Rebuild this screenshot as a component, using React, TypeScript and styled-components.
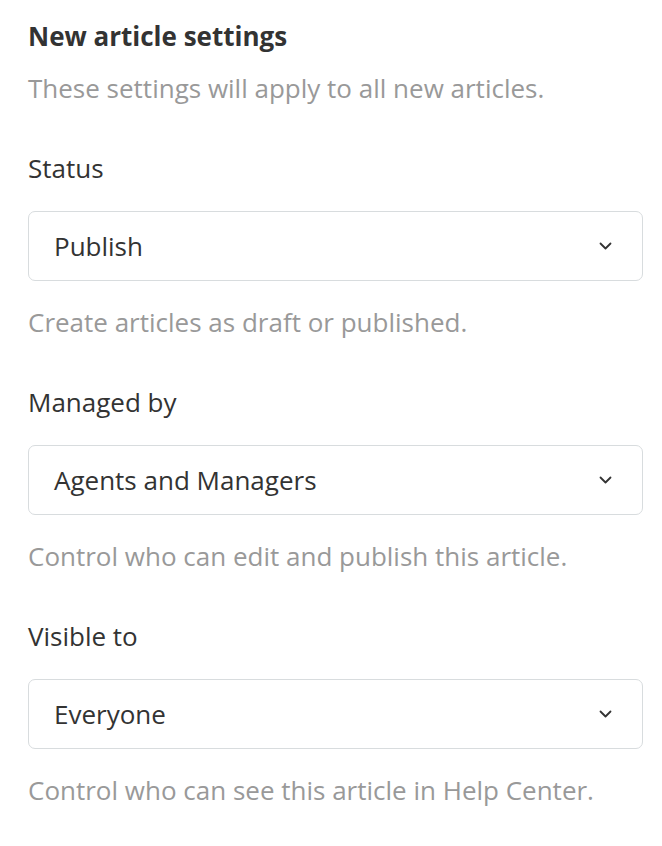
import React from "react";
import styled, { createGlobalStyle } from "styled-components";

const Global = createGlobalStyle`
  html, body { margin: 0; padding: 0; background: #ffffff; }
  body { font-family: "Open Sans", "Liberation Sans", sans-serif; -webkit-font-smoothing: antialiased; }
`;

const Page = styled.div`
  width: 615px;
  padding: 18px 19px 40px 28px;
  display: flex;
  flex-direction: column;
`;

const Heading = styled.h2`
  margin: 0;
  font-size: 26px;
  line-height: 36px;
  font-weight: 700;
  color: #333333;
`;

const Hint = styled.p<{ $top: number }>`
  margin: ${(p) => p.$top}px 0 0;
  font-size: 26px;
  line-height: 36px;
  color: #999999;
`;

const Section = styled.div`
  margin-top: 44px;
  display: flex;
  flex-direction: column;
`;

const Label = styled.label`
  font-size: 26px;
  line-height: 36px;
  color: #333333;
`;

const Select = styled.div`
  margin-top: 25px;
  height: 70px;
  box-sizing: border-box;
  border: 1.5px solid #d8dcde;
  border-radius: 7px;
  padding: 0 30px 0 25px;
  display: flex;
  align-items: center;
  justify-content: space-between;
  font-size: 26px;
  color: #333333;
`;

const Chevron = () => (
  <svg width="13" height="8" viewBox="0 0 13 8" fill="none">
    <polyline points="1.5,1.5 6.5,6.5 11.5,1.5" stroke="#333333" strokeWidth="1.8" strokeLinecap="round" strokeLinejoin="round" />
  </svg>
);

const fields = [
  { label: "Status", value: "Publish", hint: "Create articles as draft or published." },
  { label: "Managed by", value: "Agents and Managers", hint: "Control who can edit and publish this article." },
  { label: "Visible to", value: "Everyone", hint: "Control who can see this article in Help Center." },
];

export default function App() {
  return (
    <>
      <Global />
      <Page>
        <Heading>New article settings</Heading>
        <Hint $top={16}>These settings will apply to all new articles.</Hint>
        {fields.map((f) => (
          <Section key={f.label}>
            <Label>{f.label}</Label>
            <Select>
              <span>{f.value}</span>
              <Chevron />
            </Select>
            <Hint $top={23}>{f.hint}</Hint>
          </Section>
        ))}
      </Page>
    </>
  );
}
